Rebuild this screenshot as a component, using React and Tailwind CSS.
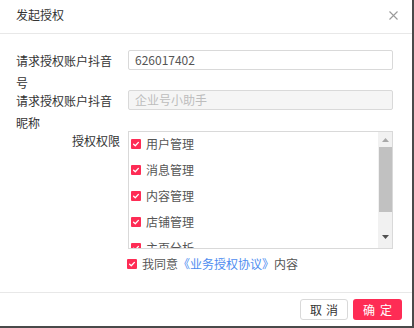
import React from "react";

const font = { fontFamily: '"Noto Sans CJK SC", "Noto Sans", sans-serif' };

function Check({ className = "" }) {
  return (
    <span className={"flex h-[10px] w-[10px] shrink-0 items-center justify-center rounded-[1px] bg-[#fe2c55] " + className}>
      <svg width="8" height="8" viewBox="0 0 8 8">
        <path d="M1.6 4.2 L3.3 5.8 L6.4 2.4" fill="none" stroke="#fff" strokeWidth="1.3" strokeLinecap="round" strokeLinejoin="round" />
      </svg>
    </span>
  );
}

const items = ["用户管理", "消息管理", "内容管理", "店铺管理", "主页分析"];

export default function App() {
  return (
    <div className="h-[328px] w-[414px] bg-[#4a4a4a]" style={font}>
      <div className="flex h-[326px] w-[412px] flex-col bg-white text-[12px] text-[#333]">
        {/* header */}
        <div className="flex h-[34px] shrink-0 items-center justify-between border-b border-[#e8e8e8] pl-[16px] pr-[14px] pb-[3px]">
          <span className="leading-[16px]">发起授权</span>
          <svg width="9" height="9" viewBox="0 0 9 9" className="mt-[1px]">
            <path d="M0.5 0.5 L8.5 8.5 M8.5 0.5 L0.5 8.5" stroke="#9a9a9a" strokeWidth="1.1" />
          </svg>
        </div>
        {/* body */}
        <div className="flex flex-1 flex-col pl-[16px] pt-[16px]">
          <div className="flex h-[40px]">
            <div className="w-[104px] shrink-0 leading-[22px]">请求授权账户抖音号</div>
            <div className="ml-[8px] flex h-[20px] w-[265px] items-center rounded-[2px] border border-[#d9d9d9] px-[6px] text-[#555]">
              626017402
            </div>
          </div>
          <div className="flex h-[40px]">
            <div className="w-[104px] shrink-0 leading-[22px]">请求授权账户抖音昵称</div>
            <div className="ml-[8px] flex h-[20px] w-[265px] items-center rounded-[2px] border border-[#d9d9d9] bg-[#f5f5f5] px-[6px] text-[#bdbdbd]">
              企业号小助手
            </div>
          </div>
          <div className="flex">
            <div className="w-[104px] shrink-0 text-right leading-[22px]">授权权限</div>
            <div className="ml-[8px] mt-[1px] flex h-[118px] w-[265px] overflow-hidden border border-[#d9d9d9]">
              <div className="flex flex-1 flex-col gap-[8px] pl-[2px] pt-[3px]">
                {items.map((t) => (
                  <div key={t} className="flex h-[18px] shrink-0 items-center gap-[5px] text-[#555]">
                    <Check />
                    <span className="leading-[18px]">{t}</span>
                  </div>
                ))}
              </div>
              <div className="flex w-[14px] shrink-0 flex-col items-center bg-[#f1f1f1]">
                <div className="flex h-[15px] w-full items-center justify-center">
                  <svg width="7" height="4" viewBox="0 0 7 4">
                    <path d="M3.5 0 L7 4 L0 4 Z" fill="#a8a8a8" />
                  </svg>
                </div>
                <div className="h-[65px] w-[13px] bg-[#c1c1c1]" />
                <div className="flex flex-1 items-center justify-center">
                  <svg width="7" height="4" viewBox="0 0 7 4" className="mt-[13px]">
                    <path d="M0 0 L7 0 L3.5 4 Z" fill="#505050" />
                  </svg>
                </div>
              </div>
            </div>
          </div>
          <div className="ml-[111px] mt-[7px] flex h-[16px] items-center gap-[5px] text-[#555]">
            <Check />
            <span>
              我同意<span className="text-[#4d8cf0]">《业务授权协议》</span>内容
            </span>
          </div>
        </div>
        {/* footer */}
        <div className="flex h-[34px] shrink-0 items-start justify-end gap-[5px] border-t border-[#e8e8e8] pr-[10px] pt-[6px]">
          <button className="flex h-[21px] w-[48px] items-center justify-center gap-[4px] rounded-[3px] border border-[#d9d9d9] bg-white text-[#333]">
            <span>取</span>
            <span>消</span>
          </button>
          <button className="flex h-[21px] w-[49px] items-center justify-center gap-[5px] rounded-[3px] bg-[#fe2c55] text-white">
            <span>确</span>
            <span>定</span>
          </button>
        </div>
      </div>
    </div>
  );
}
